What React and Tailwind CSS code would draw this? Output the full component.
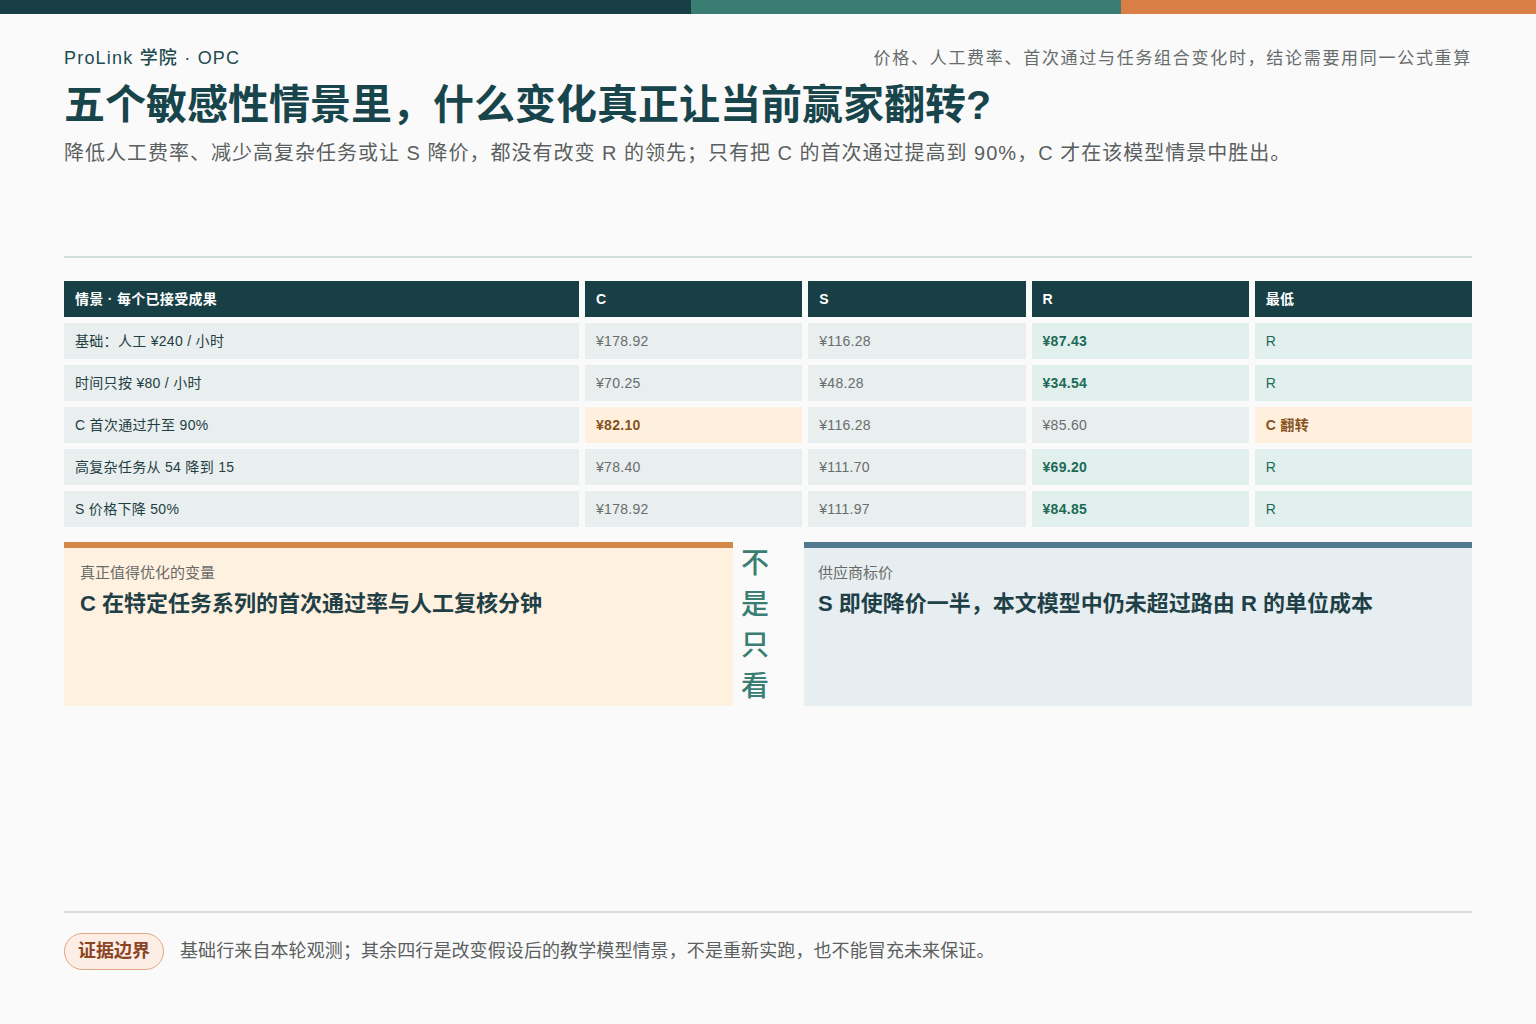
const rows = [
  { label: "基础：人工 ¥240 / 小时", c: "¥178.92", s: "¥116.28", r: "¥87.43", low: "R" },
  { label: "时间只按 ¥80 / 小时", c: "¥70.25", s: "¥48.28", r: "¥34.54", low: "R" },
  { label: "C 首次通过升至 90%", c: "¥82.10", s: "¥116.28", r: "¥85.60", low: "C 翻转", flip: true },
  { label: "高复杂任务从 54 降到 15", c: "¥78.40", s: "¥111.70", r: "¥69.20", low: "R" },
  { label: "S 价格下降 50%", c: "¥178.92", s: "¥111.97", r: "¥84.85", low: "R" },
];

const cell = "h-9 flex items-center px-[11px] text-[14px] tracking-[0.3px]";

const App = () => {
  return (
    <div
      className="min-h-screen h-[1024px] flex flex-col bg-[#fafafa] text-[#1f3f44]"
      style={{ fontFamily: '"Liberation Sans", "Noto Sans CJK SC", sans-serif' }}
    >
      <div className="flex h-[14px] shrink-0">
        <div className="w-[691px] bg-[#163e44]" />
        <div className="w-[430px] bg-[#3a7d73]" />
        <div className="flex-1 bg-[#d97e45]" />
      </div>

      <div className="flex flex-col flex-1 px-16">
        <div className="flex items-center justify-between pt-[31px]">
          <span className="text-[18px] leading-[27px] font-medium tracking-[1.2px] text-[#1d4b50]">ProLink 学院 · OPC</span>
          <span className="text-[17px] leading-[27px] tracking-[1.7px] text-[#666c6c]">价格、人工费率、首次通过与任务组合变化时，结论需要用同一公式重算</span>
        </div>
        <h1 className="mt-[7px] text-[41px] leading-[52px] font-bold text-[#17454b]">
          五个敏感性情景里，什么变化真正让当前赢家翻转?
        </h1>
        <p className="mt-[7px] text-[20px] leading-[30px] tracking-[1px] text-[#5a5f5f]">
          降低人工费率、减少高复杂任务或让 S 降价，都没有改变 R 的领先；只有把 C 的首次通过提高到 90%，C 才在该模型情景中胜出。
        </p>

        <div className="mt-[88px] h-[2px] bg-[#d3dfdd]" />

        <div className="mt-[23px] grid grid-cols-[515px_1fr_1fr_1fr_1fr] gap-x-[6px] gap-y-[6px]">
          {["情景 · 每个已接受成果", "C", "S", "R", "最低"].map((h) => (
            <div key={h} className={`${cell} bg-[#173f45] text-white font-bold text-[13px]`}>
              {h}
            </div>
          ))}
          {rows.map((row) => (
            <>
              <div key={row.label + "l"} className={`${cell} bg-[#e9eeee] text-[#1f3f44]`}>{row.label}</div>
              <div className={`${cell} ${row.flip ? "bg-[#fff0dd] text-[#87531d] font-bold" : "bg-[#e9eeee] text-[#686d6d]"}`}>{row.c}</div>
              <div className={`${cell} bg-[#e9eeee] text-[#686d6d]`}>{row.s}</div>
              <div className={`${cell} ${row.flip ? "bg-[#e9eeee] text-[#686d6d]" : "bg-[#e1f0ec] text-[#1e6a57] font-bold"}`}>{row.r}</div>
              <div className={`${cell} ${row.flip ? "bg-[#fff0dd] text-[#87531d] font-bold" : "bg-[#e1f0ec] text-[#1e6a57] font-medium"}`}>{row.low}</div>
            </>
          ))}
        </div>

        <div className="mt-[15px] flex">
          <div className="w-[669px] h-[164px] bg-[#fff1e0] border-t-[6px] border-[#d3884a] px-4 pt-[14px]">
            <div className="text-[15px] text-[#6a6a66]">真正值得优化的变量</div>
            <div className="mt-[2px] text-[22px] leading-[33px] font-bold text-[#1f4046]">C 在特定任务系列的首次通过率与人工复核分钟</div>
          </div>
          <div className="w-[71px] pl-[8px] pt-[1px] flex flex-col text-[28px] leading-[41px] text-[#3a7d72] font-medium">
            <span>不</span>
            <span>是</span>
            <span>只</span>
            <span>看</span>
          </div>
          <div className="flex-1 h-[164px] bg-[#e6eef1] border-t-[6px] border-[#527a8f] px-[14px] pt-[14px]">
            <div className="text-[15px] text-[#6a6a66]">供应商标价</div>
            <div className="mt-[2px] text-[22px] leading-[33px] font-bold text-[#1f4046]">S 即使降价一半，本文模型中仍未超过路由 R 的单位成本</div>
          </div>
        </div>

        <div className="mt-auto h-[2px] bg-[#d7dfde]" />
        <div className="flex items-center gap-4 pt-[20px] pb-[54px]">
          <span className="h-[37px] px-[13px] flex items-center rounded-full border border-[#e0a584] bg-[#fdeee5] text-[18px] font-bold text-[#8a4526]">
            证据边界
          </span>
          <span className="text-[18px] tracking-[0.1px] text-[#5a5f5f]">
            基础行来自本轮观测；其余四行是改变假设后的教学模型情景，不是重新实跑，也不能冒充未来保证。
          </span>
        </div>
      </div>
    </div>
  );
};

export default App;
